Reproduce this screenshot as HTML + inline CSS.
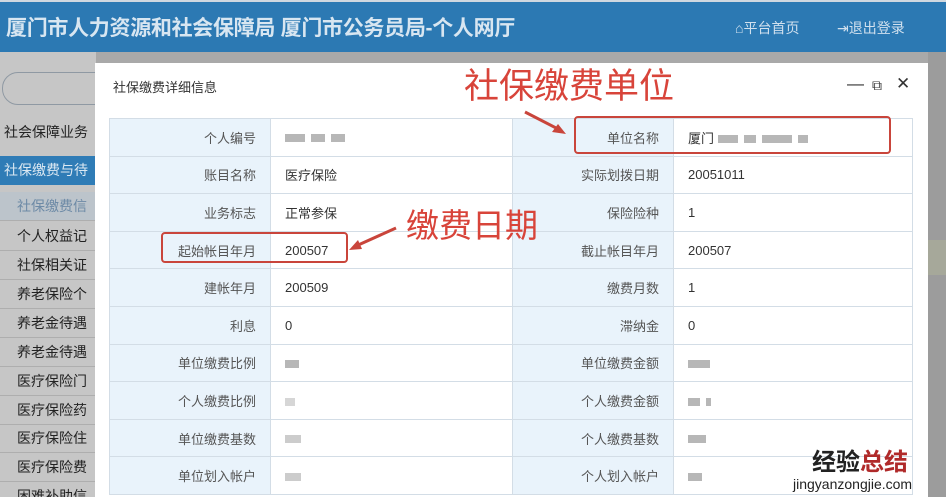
<!DOCTYPE html>
<html><head><meta charset="utf-8"><style>
*{margin:0;padding:0;box-sizing:border-box}
html,body{width:946px;height:497px;overflow:hidden}
body{position:relative;background:#a9a9a9;font-family:"Liberation Sans","Noto Sans CJK SC",sans-serif;}
.hdr{position:absolute;left:0;top:0;width:946px;height:52px;background:#2c79b3;border-top:2px solid #cfd8e0}
.hdr .t{position:absolute;left:6px;top:10px;font-size:21px;color:#d8e6f1;font-weight:bold;letter-spacing:-0.3px}
.hdr .n{position:absolute;top:16px;font-size:14px;color:#d0e0ee}
.side{position:absolute;left:0;top:52px;width:96px;height:445px;background:#c6c6c6;overflow:hidden}
.side .in{position:absolute;left:2px;top:20px;width:110px;height:33px;border:1px solid #8f99a3;border-radius:16px}
.side .it{position:absolute;left:0;width:96px;height:29px;line-height:29px;font-size:14px;color:#222;border-bottom:1px solid #aeaeae;padding-left:17px;white-space:nowrap;overflow:hidden}
.rt{position:absolute;left:928px;top:52px;width:18px;height:445px;background:#9c9c9c}
.modal{position:absolute;left:95px;top:63px;width:833px;height:434px;background:#fff;overflow:hidden}
.mt{position:absolute;left:18px;top:14px;font-size:13px;color:#333}
.ctl{position:absolute;top:11px;font-size:17px;color:#333}
table{position:absolute;left:14px;top:55px;border-collapse:collapse;font-size:13px;color:#333}
td{height:37.6px;border:1px solid #d3dde6;padding:0 14px}
td.l{background:#e9f3fb;text-align:right;color:#555}
.c1{width:161px}.c2{width:242px}.c3{width:161px}.c4{width:239px}
.bl{display:inline-block;height:8px;background:#999;vertical-align:middle;margin-right:6px;opacity:.7}
.red{position:absolute;color:#d8443a;font-size:35px;font-family:"Noto Sans CJK SC",sans-serif;line-height:1}
.box{position:absolute;border:2px solid #c9453b;border-radius:4px}
</style></head><body>
<div class="hdr"><div class="t">厦门市人力资源和社会保障局 厦门市公务员局-个人网厅</div>
<div class="n" style="left:735px">⌂平台首页</div><div class="n" style="left:837px">⇥退出登录</div></div>
<div class="side">
<div class="in"></div>
<div class="it" style="top:66px;padding-left:4px;background:none;border:none">社会保障业务</div>
<div class="it" style="top:104px;padding-left:4px;background:#2f7cb6;color:#dbe8f2;border:none">社保缴费与待</div>
<div class="it" style="top:140px;background:#bcc4cb;color:#6d8aa6">社保缴费信</div>
<div class="it" style="top:170px">个人权益记</div>
<div class="it" style="top:199px">社保相关证</div>
<div class="it" style="top:228px">养老保险个</div>
<div class="it" style="top:257px">养老金待遇</div>
<div class="it" style="top:286px">养老金待遇</div>
<div class="it" style="top:315px">医疗保险门</div>
<div class="it" style="top:344px">医疗保险药</div>
<div class="it" style="top:372px">医疗保险住</div>
<div class="it" style="top:401px">医疗保险费</div>
<div class="it" style="top:430px;height:15px;line-height:29px;border:none">困难补助信</div>
</div>
<div class="rt"><div style="position:absolute;top:188px;left:0;width:18px;height:35px;background:#a6a89a"></div></div>
<div class="modal">
<div class="mt">社保缴费详细信息</div>
<div class="ctl" style="left:752px">—</div><div class="ctl" style="left:777px;font-size:14px;top:14px">⧉</div><div class="ctl" style="left:801px">✕</div>
<table>
<tr><td class="l c1">个人编号</td><td class="c2"><span class="bl" style="width:20px"></span><span class="bl" style="width:14px"></span><span class="bl" style="width:14px"></span></td><td class="l c3">单位名称</td><td class="c4">厦门 <span class="bl" style="width:20px"></span><span class="bl" style="width:12px"></span><span class="bl" style="width:30px"></span><span class="bl" style="width:10px"></span></td></tr>
<tr><td class="l">账目名称</td><td>医疗保险</td><td class="l">实际划拨日期</td><td>20051011</td></tr>
<tr><td class="l">业务标志</td><td>正常参保</td><td class="l">保险险种</td><td>1</td></tr>
<tr><td class="l">起始帐目年月</td><td>200507</td><td class="l">截止帐目年月</td><td>200507</td></tr>
<tr><td class="l">建帐年月</td><td>200509</td><td class="l">缴费月数</td><td>1</td></tr>
<tr><td class="l">利息</td><td>0</td><td class="l">滞纳金</td><td>0</td></tr>
<tr><td class="l">单位缴费比例</td><td><span class="bl" style="width:14px"></span></td><td class="l">单位缴费金额</td><td><span class="bl" style="width:22px"></span></td></tr>
<tr><td class="l">个人缴费比例</td><td><span class="bl" style="width:10px;opacity:.4"></span></td><td class="l">个人缴费金额</td><td><span class="bl" style="width:12px"></span><span class="bl" style="width:5px"></span></td></tr>
<tr><td class="l">单位缴费基数</td><td><span class="bl" style="width:16px;opacity:.5"></span></td><td class="l">个人缴费基数</td><td><span class="bl" style="width:18px"></span></td></tr>
<tr><td class="l">单位划入帐户</td><td><span class="bl" style="width:16px;opacity:.5"></span></td><td class="l">个人划入帐户</td><td><span class="bl" style="width:14px"></span></td></tr>
</table>
</div>
<div class="box" style="left:574px;top:116px;width:317px;height:38px"></div>
<div class="box" style="left:161px;top:232px;width:187px;height:31px"></div>
<div class="red" style="left:464px;top:66px">社保缴费单位</div>
<div class="red" style="left:406px;top:207px;font-size:33px">缴费日期</div>
<svg style="position:absolute;left:0;top:0" width="946" height="497">
<path d="M525 112 L560 130" stroke="#c9453b" stroke-width="3"/><path d="M566 134 L552 132 L558 124 Z" fill="#c9453b"/>
<path d="M396 228 L356 246" stroke="#c9453b" stroke-width="3"/><path d="M349 250 L358 240 L362 249 Z" fill="#c9453b"/>
</svg>
<div style="position:absolute;left:812px;top:444px;font-size:24px;font-weight:bold;color:#222;font-family:'Noto Sans CJK SC',sans-serif;line-height:32px">经验<span style="color:#b02a2a">总结</span></div>
<div style="position:absolute;left:793px;top:476px;font-size:14px;line-height:17px;color:#222;background:#fff">jingyanzongjie.com</div>
</body></html>
